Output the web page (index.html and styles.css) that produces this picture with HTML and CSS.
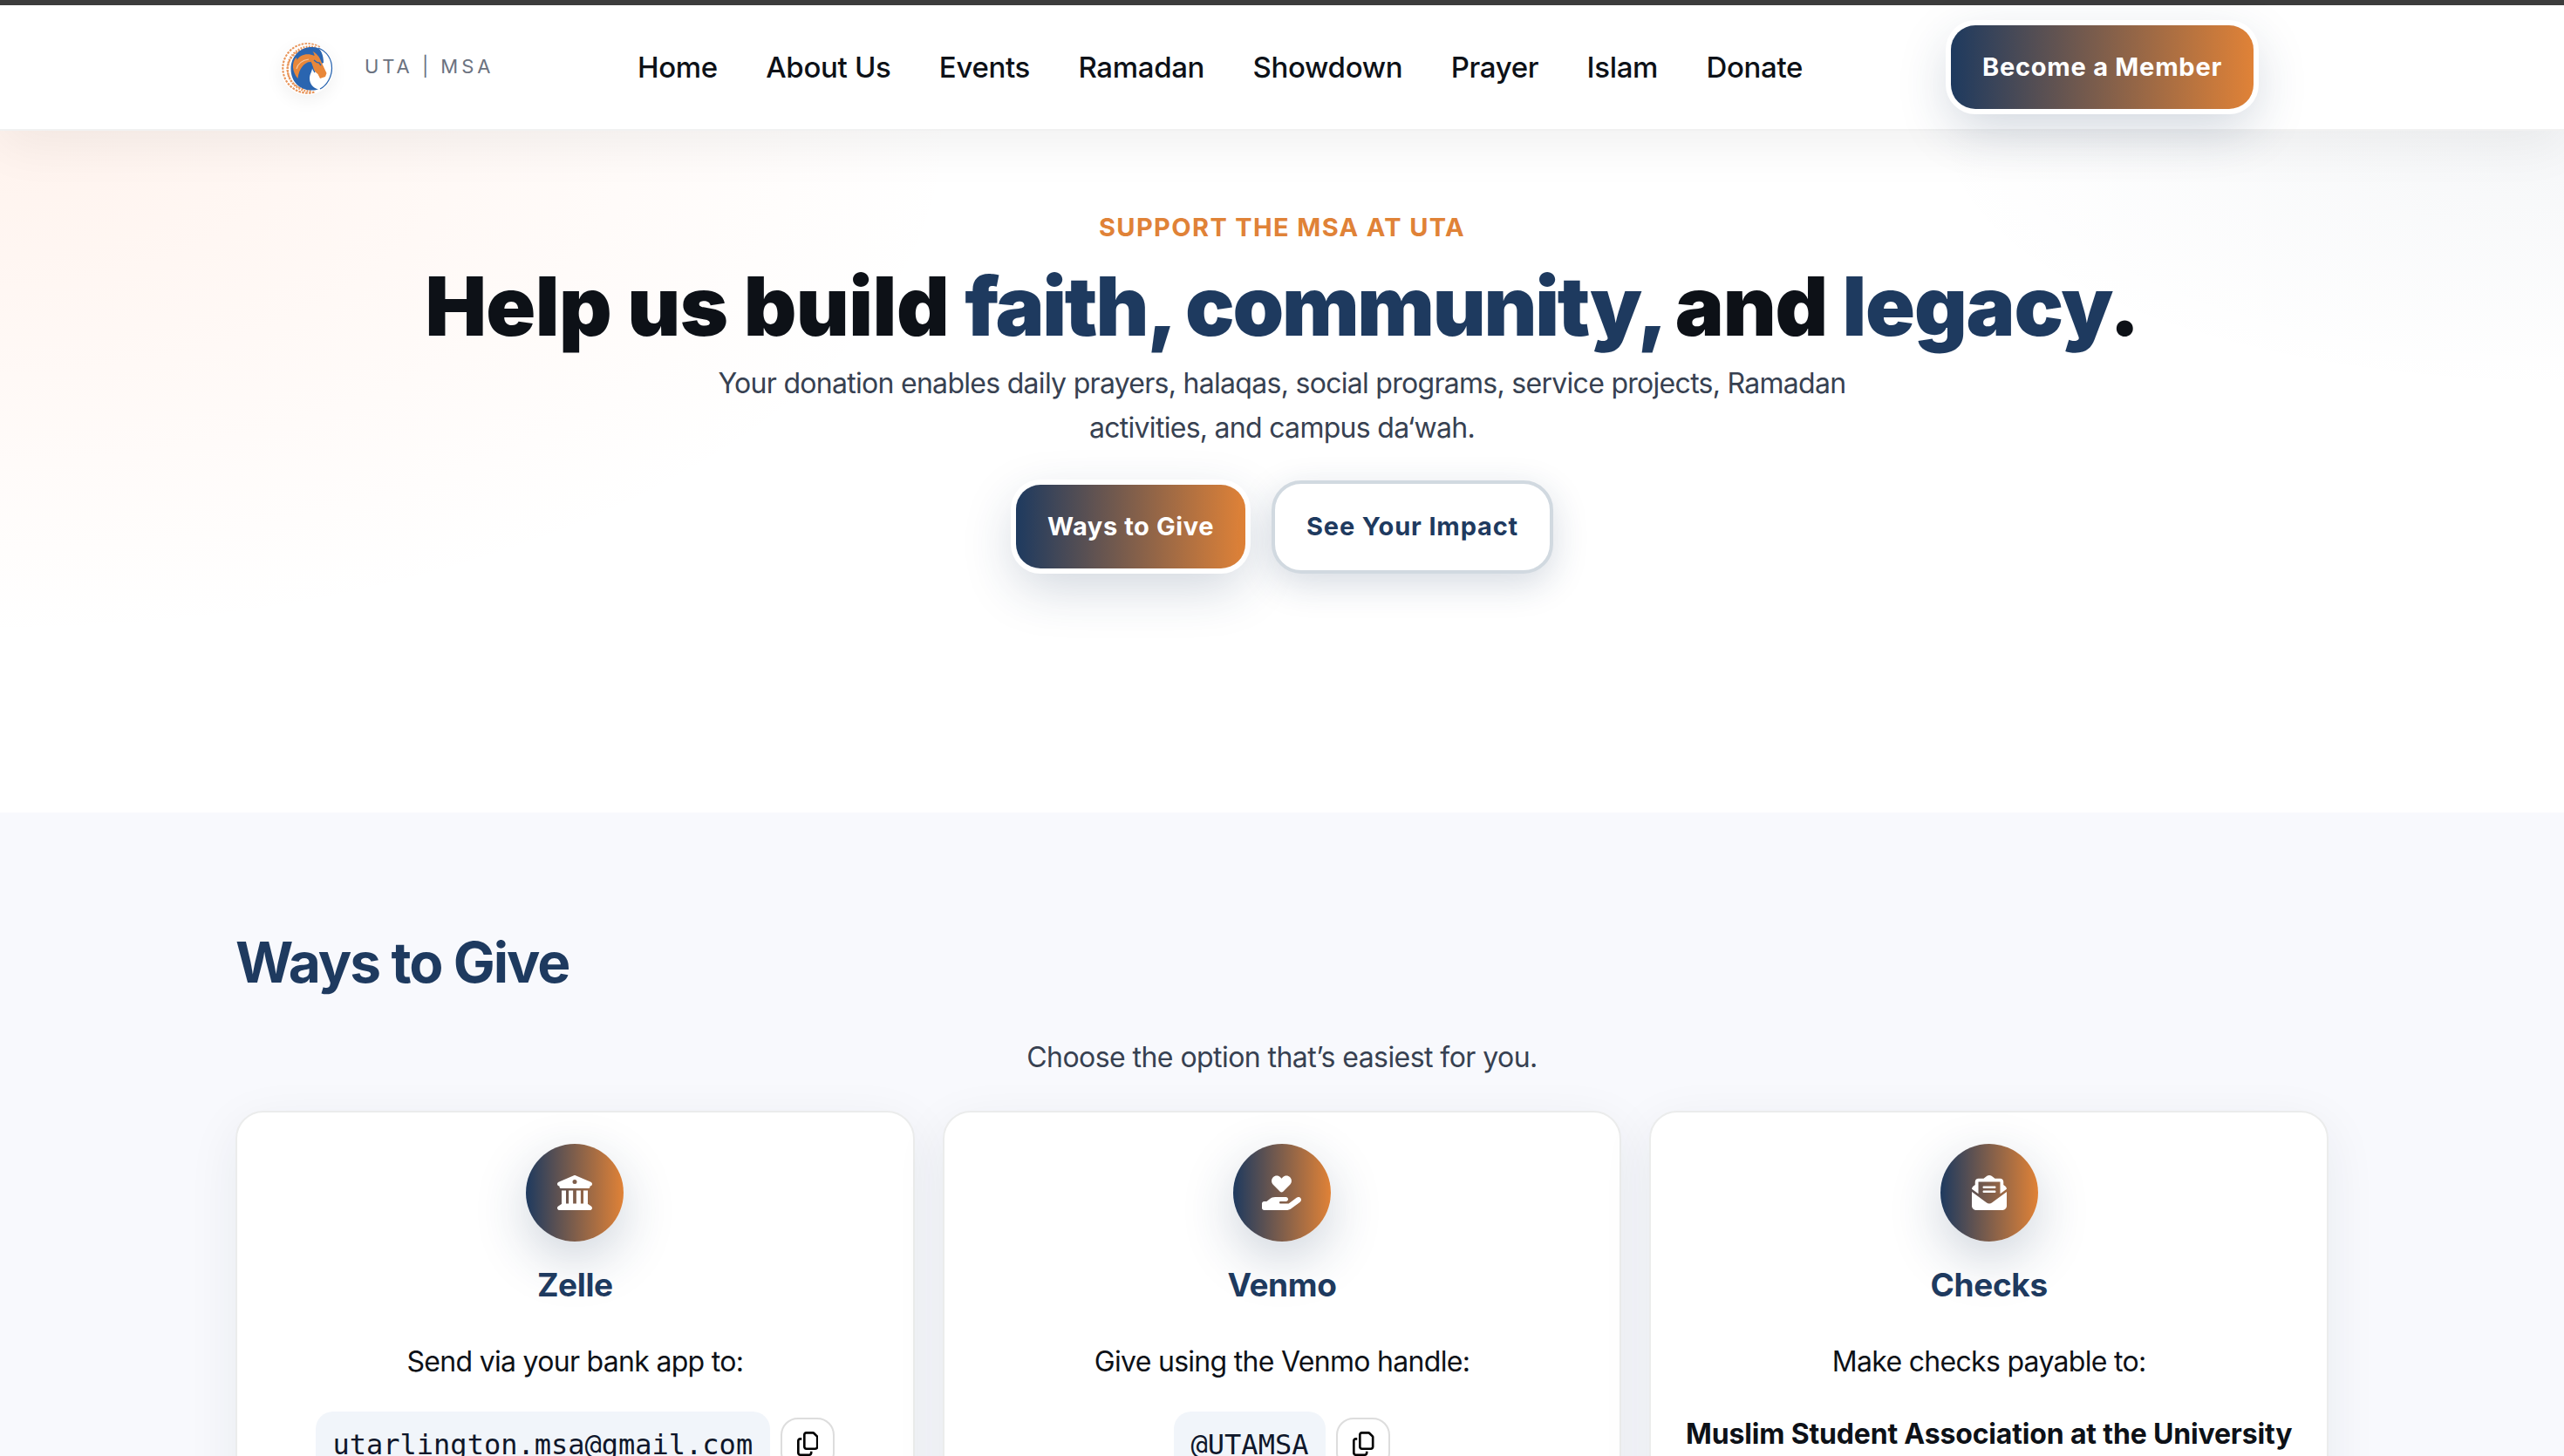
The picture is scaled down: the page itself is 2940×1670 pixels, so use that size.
FILE: index.html
```html
<!DOCTYPE html>
<html lang="en">
<head>
<meta charset="utf-8">
<title>Donate | UTA MSA</title>
<link rel="stylesheet" href="styles.css">
</head>
<body>
<header class="site-header">
  <a class="brand">
    <svg class="logo" viewBox="0 0 60 60">
      <circle cx="30" cy="30" r="29" fill="#fff"/>
      <g fill="none" stroke="#e8965c">
        <path d="M45 4.500A28.500 28.500 0 1 0 39 56.500" stroke-width="2.200" stroke-dasharray="2.600 1.300"/>
        <path d="M40 5.500A25.500 25.500 0 1 0 35 55.500" stroke-width="2.400" stroke-dasharray="1.800 1.400"/>
        <path d="M26 8A23 23 0 0 0 26 53" stroke-width="2" stroke-dasharray="2.600 1.400"/>
      </g>
      <path d="M37 5C23 4 11.500 15 11.500 30S22 54 34 54.500c4 .3 7-.3 9-1.200C37 52 33 47 33 41c0-5 3-8 3-12l13-6C49 14 46 7 41 5.500z" fill="#2a65b0"/>
      <path d="M43 6c10 4 15.500 13 15.500 23S53 49 45 53" fill="none" stroke="#2a65b0" stroke-width="1.300"/>
      <path d="M36.500 10c4 2 8 6 9.500 11l6.500 14-1.500 4-6 2-2.500-5c-3-2-5-5-6-8-.5-3-1.500-5-3.500-6-6 1-12 7-13.500 19-7-8-7-19-2-24 1 1 1 2 1 3 3-6 12-9 20-5 0-2-1-4-2-5z" fill="#e8873a"/>
      <path d="M18 30c2-7 7-10 14-11" fill="none" stroke="#f6c9a3" stroke-width="1.200"/>
      <path d="M38 20c2 2 4 3 6 3l2 3M34 22c2 4 2 8 5 12" fill="none" stroke="#2a65b0" stroke-width="1.400"/>
    </svg>
    <span class="brand-name">UTA | MSA</span>
  </a>
  <nav class="main-nav">
    <a>Home</a><a>About Us</a><a>Events</a><a>Ramadan</a><a>Showdown</a><a>Prayer</a><a>Islam</a><a>Donate</a>
  </nav>
  <a class="btn btn-primary join">Become a Member</a>
</header>

<section class="hero">
  <p class="eyebrow">Support the MSA at UTA</p>
  <h1><span class="loose">Help us build </span><em class="tight">faith, community,</em> and <em>legacy</em>.</h1>
  <p class="lead">Your donation enables daily prayers, halaqas, social programs, service projects, Ramadan<br>activities, and campus da‘wah.</p>
  <div class="actions">
    <a class="btn btn-primary">Ways to Give</a>
    <a class="btn btn-outline">See Your Impact</a>
  </div>
</section>

<section class="ways">
  <div class="container">
    <h2>Ways to Give</h2>
    <p class="intro">Choose the option that’s easiest for you.</p>
    <div class="cards">
      <article class="card">
        <div class="badge"><svg viewBox="0 0 512 512"><path d="M243.4 2.600l-224 96c-14 6-21.800 21-18.700 35.800S16.800 160 32 160v8c0 13.300 10.700 24 24 24H456c13.300 0 24-10.700 24-24v-8c15.200 0 28.300-10.700 31.300-25.600s-4.800-29.900-18.700-35.800l-224-96c-8-3.400-17.200-3.400-25.200 0zM128 224H64V420.300c-.6 .3-1.200 .7-1.800 1.100l-48 32c-11.700 7.800-17 22.400-12.900 35.900S17.900 512 32 512H480c14.100 0 26.500-9.200 30.600-22.700s-1.100-28.100-12.900-35.900l-48-32c-.6-.4-1.200-.7-1.800-1.100V224H384V416H344V224H280V416H232V224H168V416H128V224zM256 64a32 32 0 1 1 0 64 32 32 0 1 1 0-64z"/></svg></div>
        <h3>Zelle</h3>
        <p>Send via your bank app to:</p>
        <div class="copy-row"><code>utarlington.msa@gmail.com</code><button class="copy" aria-label="Copy"><svg viewBox="0 0 448 512"><path d="M384 336H192c-8.800 0-16-7.200-16-16V64c0-8.800 7.200-16 16-16l140.100 0L400 115.900V320c0 8.800-7.200 16-16 16zM192 384H384c35.300 0 64-28.700 64-64V115.900c0-12.700-5.100-24.900-14.100-33.900L366.100 14.100c-9-9-21.200-14.100-33.900-14.100H192c-35.300 0-64 28.700-64 64V320c0 35.300 28.700 64 64 64zM64 128c-35.300 0-64 28.700-64 64V448c0 35.300 28.700 64 64 64H256c35.300 0 64-28.700 64-64V416H272v32c0 8.800-7.200 16-16 16H64c-8.800 0-16-7.200-16-16V192c0-8.800 7.200-16 16-16H96V128H64z"/></svg></button></div>
      </article>
      <article class="card">
        <div class="badge"><svg viewBox="0 0 576 512"><path d="M163.900 136.900c-29.400-29.800-29.400-78.200 0-108s77-29.800 106.400 0l17.700 18 17.700-18c29.400-29.800 77-29.800 106.400 0s29.400 78.200 0 108L310.500 240.100c-6.200 6.300-14.300 9.400-22.500 9.400s-16.300-3.100-22.500-9.400L163.900 136.900zM568.200 336.300c13.100 17.800 9.300 42.800-8.500 55.900L433.100 485.500c-23.400 17.200-51.600 26.500-80.700 26.500H32c-17.700 0-32-14.300-32-32V416c0-17.700 14.300-32 32-32H68.800l44.900-36c22.700-18.200 50.900-28 80-28H352c17.700 0 32 14.300 32 32s-14.300 32-32 32H272c-8.800 0-16 7.200-16 16s7.200 16 16 16H392.600l119.700-88.200c17.800-13.100 42.800-9.300 55.900 8.500z"/></svg></div>
        <h3>Venmo</h3>
        <p>Give using the Venmo handle:</p>
        <div class="copy-row"><code>@UTAMSA</code><button class="copy" aria-label="Copy"><svg viewBox="0 0 448 512"><path d="M384 336H192c-8.800 0-16-7.200-16-16V64c0-8.800 7.200-16 16-16l140.100 0L400 115.900V320c0 8.800-7.200 16-16 16zM192 384H384c35.300 0 64-28.700 64-64V115.900c0-12.700-5.100-24.900-14.100-33.900L366.100 14.100c-9-9-21.200-14.100-33.900-14.100H192c-35.300 0-64 28.700-64 64V320c0 35.300 28.700 64 64 64zM64 128c-35.300 0-64 28.700-64 64V448c0 35.300 28.700 64 64 64H256c35.300 0 64-28.700 64-64V416H272v32c0 8.800-7.200 16-16 16H64c-8.800 0-16-7.200-16-16V192c0-8.800 7.200-16 16-16H96V128H64z"/></svg></button></div>
      </article>
      <article class="card">
        <div class="badge"><svg viewBox="0 0 512 512"><path d="M215.400 96H96v177.400L.2 202.500c1.600-18.100 10.900-34.900 25.700-45.800L48 140.300V96c0-26.500 21.500-48 48-48h76.600l49.900-36.900C232.200 3.900 243.900 0 256 0s23.800 3.900 33.500 11L339.400 48H416c26.500 0 48 21.500 48 48v44.300l22.100 16.400c14.800 10.900 24.100 27.700 25.700 45.800L416 273.400V96H215.400zM0 448V242.100L217.600 403.300c11.100 8.200 24.600 12.700 38.400 12.700s27.300-4.400 38.400-12.700L512 242.100V448c0 35.300-28.700 64-64 64H64c-35.300 0-64-28.700-64-64zM176 160H336c8.800 0 16 7.200 16 16s-7.200 16-16 16H176c-8.800 0-16-7.200-16-16s7.200-16 16-16zm0 64H336c8.800 0 16 7.200 16 16s-7.200 16-16 16H176c-8.800 0-16-7.200-16-16s7.200-16 16-16z"/></svg></div>
        <h3>Checks</h3>
        <p>Make checks payable to:</p>
        <p class="payee"><strong>Muslim Student Association at the University</strong></p>
      </article>
    </div>
  </div>
</section>
</body>
</html>
```
FILE: styles.css
```css
* { box-sizing: border-box; margin: 0; }
html { overflow: hidden; }
body {
  height: 1670px;
  overflow: hidden;
  font-family: Inter, "Liberation Sans", sans-serif;
  font-size: 32px;
  line-height: 1.6;
  color: #0d1117;
  background: #fff;
}
.site-header {
  position: relative;
  z-index: 1;
  display: flex;
  align-items: center;
  height: 150px;
  padding: 0 356px 0 322px;
  border-top: 6px solid #3c3c3c;
  border-bottom: 2px solid #f1f1f1;
  background: #fff;
  box-shadow: 0 16px 60px rgba(0, 0, 0, .06);
}
.brand { display: flex; align-items: center; gap: 36px; }
.logo { width: 60px; height: 60px; margin-top: 4px; border-radius: 50%; box-shadow: 0 6px 20px rgba(0, 0, 0, .06); }
.brand-name { width: 148px; font-size: 22px; letter-spacing: .18em; white-space: nowrap; color: #6b7280; }
.main-nav { display: flex; gap: 55.4px; margin-left: 165px; font-size: 33px; font-weight: 500; letter-spacing: -.01em; }
.join { margin-left: auto; }
.btn {
  display: inline-flex;
  align-items: center;
  height: 96px;
  padding: 0 36px;
  border-radius: 28px;
  font-size: 29px;
  font-weight: 700;
  letter-spacing: .02em;
}
.btn.join { letter-spacing: .026em; }
.btn-primary {
  color: #fff;
  background: linear-gradient(90deg, #1e3a5f, #e08237);
  box-shadow: 0 0 0 6px #fff, 0 20px 60px rgba(30, 58, 95, .22);
}
.btn-outline {
  height: 107px;
  border: 4px solid #d1d9e0;
  border-radius: 34px;
  letter-spacing: .0285em;
  color: #1e3a5f;
  background: #fff;
  box-shadow: 0 12px 40px rgba(30, 58, 95, .18);
}
.hero {
  height: 782px;
  padding-top: 88px;
  text-align: center;
  background:
    radial-gradient(1100px 580px at 0 0, rgba(255, 140, 85, .1), transparent),
    radial-gradient(740px 300px at 100% 0, rgba(30, 58, 95, .045), transparent),
    #fff;
}
.eyebrow { font-size: 29px; font-weight: 700; letter-spacing: .047em; text-transform: uppercase; color: #e08237; }
h1 { margin-top: 15.6px; font-size: 94px; font-weight: 900; line-height: 1.1; letter-spacing: -1.2px; }
h1 em { font-style: normal; color: #1e3a5f; }
h1 .loose { letter-spacing: -.55px; }
h1 .tight { margin-right: -7px; letter-spacing: -2.3px; }
.lead, .intro { color: #374151; }
.lead { margin-top: 10.8px; letter-spacing: -.71px; }
.actions { display: flex; justify-content: center; align-items: center; gap: 30px; margin-top: 34.4px; padding-left: 6px; }
.ways { height: 738px; padding-top: 121px; overflow: hidden; background: #f8f9fd; }
.container { width: 2400px; margin: 0 auto; }
h2 { font-size: 64px; font-weight: 700; letter-spacing: -.031em; color: #1e3a5f; }
.intro { margin-top: 32px; text-align: center; letter-spacing: -.56px; }
.cards { display: grid; grid-template-columns: repeat(3, 1fr); gap: 32px; margin-top: 35.4px; }
.card {
  display: flex;
  flex-direction: column;
  align-items: center;
  height: 500px;
  padding-top: 36px;
  border: 2px solid #ebecec;
  border-radius: 32px;
  background: #fff;
  box-shadow: 0 16px 60px rgba(30, 40, 60, .07);
}
.card p { margin-top: 33px; letter-spacing: -.7px; }
.card .payee { margin-top: 32px; letter-spacing: -.17px; }
.badge {
  display: grid;
  place-items: center;
  width: 112px;
  height: 112px;
  border-radius: 50%;
  background: linear-gradient(90deg, #1e3a5f, #e08237);
  box-shadow: 0 20px 60px rgba(30, 58, 95, .22);
}
.badge svg { height: 40px; fill: #fff; }
h3 { margin-top: 20px; font-size: 37px; font-weight: 700; letter-spacing: -.01em; color: #1e3a5f; }
.copy-row { display: flex; gap: 12px; margin-top: 31.7px; }
code { padding: 12px 20px 10px; border-radius: 20px; font: 32px/52px "DejaVu Sans Mono", monospace; color: #0f172a; background: #f1f5fa; }
.copy { display: grid; place-items: center; width: 62px; height: 60px; margin-top: 7px; padding: 0; border: 2px solid #ddd; border-radius: 20px; background: #fff; }
.copy svg { height: 28px; }
```
